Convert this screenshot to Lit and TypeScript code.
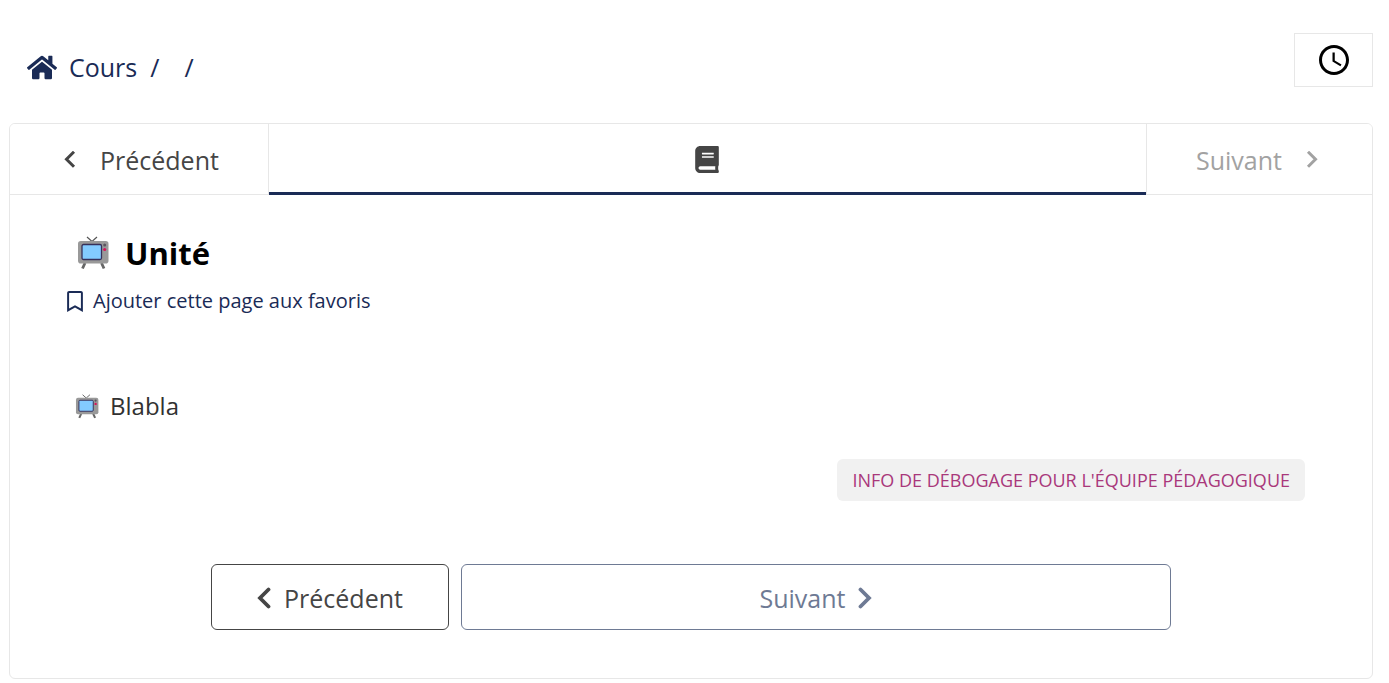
import { LitElement, html, css, svg } from "lit";
import { customElement, property } from "lit/decorators.js";

const shapes = {
  home: {
    box: "0 0 576 512",
    body: svg`<path d="M280.37 148.26L96 300.11V464a16 16 0 0 0 16 16l112.06-.29a16 16 0 0 0 15.92-16V368a16 16 0 0 1 16-16h64a16 16 0 0 1 16 16v95.64a16 16 0 0 0 16 16.05L464 480a16 16 0 0 0 16-16V300L295.67 148.26a12.19 12.19 0 0 0-15.3 0zM571.6 251.47L488 182.56V44.05a12 12 0 0 0-12-12h-56a12 12 0 0 0-12 12v72.61L318.47 43a48 48 0 0 0-61 0L4.34 251.47a12 12 0 0 0-1.6 16.9l25.5 31A12 12 0 0 0 45.15 301l235.22-193.74a12.19 12.19 0 0 1 15.3 0L530.9 301a12 12 0 0 0 16.9-1.6l25.5-31a12 12 0 0 0-1.7-16.93z"/>`,
  },
  clock: {
    box: "0 0 24 24",
    body: svg`<path d="M11.99 2C6.47 2 2 6.48 2 12s4.47 10 9.99 10C17.52 22 22 17.52 22 12S17.52 2 11.99 2zM12 20c-4.42 0-8-3.58-8-8s3.58-8 8-8 8 3.58 8 8-3.58 8-8 8zm.5-13H11v6l5.25 3.15.75-1.23-4.5-2.67z"/>`,
  },
  book: {
    box: "0 0 448 512",
    body: svg`<path d="M448 360V24c0-13.3-10.7-24-24-24H96C43 0 0 43 0 96v320c0 53 43 96 96 96h328c13.3 0 24-10.7 24-24v-16c0-7.5-3.5-14.3-8.9-18.7-4.2-15.4-4.2-59.3 0-74.7 5.4-4.3 8.9-11.1 8.9-18.6zM128 134c0-3.3 2.7-6 6-6h212c3.3 0 6 2.7 6 6v20c0 3.3-2.7 6-6 6H134c-3.3 0-6-2.7-6-6v-20zm0 64c0-3.3 2.7-6 6-6h212c3.3 0 6 2.7 6 6v20c0 3.3-2.7 6-6 6H134c-3.3 0-6-2.7-6-6v-20zm253.4 250H96c-17.7 0-32-14.3-32-32 0-17.6 14.4-32 32-32h285.4c-1.9 17.1-1.9 46.9 0 64z"/>`,
  },
  bookmark: {
    box: "0 0 384 512",
    body: svg`<path d="M336 0H48C21.49 0 0 21.49 0 48v464l192-112 192 112V48c0-26.51-21.49-48-48-48zm0 428.43l-144-84-144 84V54a6 6 0 0 1 6-6h276c3.314 0 6 2.683 6 5.996V428.43z"/>`,
  },
  thinLeft: {
    box: "0 0 12 18",
    body: svg`<path d="M10 .8 2.500 8.300l7.500 7.500" fill="none" stroke="currentColor" stroke-width="3"/>`,
  },
  thinRight: {
    box: "0 0 12 18",
    body: svg`<path d="M2 .8 9.500 8.300l-7.500 7.500" fill="none" stroke="currentColor" stroke-width="3"/>`,
  },
  boldLeft: {
    box: "0 0 14 22",
    body: svg`<path d="M11.500 2.500 3 11l8.500 8.500" fill="none" stroke="currentColor" stroke-width="3.800" stroke-linecap="round"/>`,
  },
  boldRight: {
    box: "0 0 14 22",
    body: svg`<path d="M2.500 2.500 11 11l-8.500 8.500" fill="none" stroke="currentColor" stroke-width="3.800" stroke-linecap="round"/>`,
  },
  tv: {
    box: "0 0 32 34",
    body: svg`
      <path d="M10 1 15 5.500 20 1" fill="none" stroke="#555" stroke-width="1.200"/>
      <path d="M8 27 5.500 32.500M24.500 27l2.500 5.500" fill="none" stroke="#666" stroke-width="2.800"/>
      <rect x="1" y="5" width="30.500" height="22.500" rx="2.800" fill="#999"/>
      <rect x="5" y="8.500" width="19.500" height="15" rx="1.500" fill="#83cbff" stroke="#37305a" stroke-width="1.300"/>
      <circle cx="27.700" cy="9" r="1.500" fill="#5c5560"/>
      <circle cx="27.700" cy="13.500" r="1.600" fill="#d8135c"/>`,
  },
};

@customElement("ui-icon")
export class UiIcon extends LitElement {
  @property() name: keyof typeof shapes = "home";

  static styles = css`
    :host { display: inline-flex; flex: none; }
    .glyph { width: 100%; height: 100%; fill: currentColor; }
  `;

  render() {
    const shape = shapes[this.name];
    return html`<svg class="glyph" viewBox=${shape.box} aria-hidden="true">${shape.body}</svg>`;
  }
}

@customElement("app-root")
export class AppRoot extends LitElement {
  static styles = css`
    :host {
      display: block;
      padding: 33px 16px 4px 9px;
      background: #fff;
      color: #313131;
      font-family: "Segoe UI", "Open Sans", "Noto Sans", sans-serif;
      font-size: 24px;
      line-height: 36px;
    }
    * { box-sizing: border-box; }
    button { font: inherit; margin: 0; background: #fff; cursor: pointer; }
    button:disabled { cursor: default; }
    a { color: inherit; text-decoration: none; }
    .top { display: flex; justify-content: space-between; align-items: flex-start; }
    .crumbs {
      display: flex; align-items: center; margin: 0; padding: 16px 18px 0; list-style: none;
      color: #1a2b56; font-size: 25px;
    }
    .crumbs li + li::before { content: "/"; padding: 0 12px 0 13px; }
    .home { display: flex; align-items: center; gap: 12px; }
    .home-icon { width: 30px; height: 27px; }
    .history {
      display: flex; align-items: center; justify-content: center;
      width: 79px; height: 54px; padding: 0; border: 1px solid #e7e7e7; color: #000;
    }
    .clock-icon { width: 36px; height: 36px; }
    .card { margin-top: 36px; border: 1px solid #e7e7e7; border-radius: 6px; overflow: hidden; }
    .tabs { display: flex; height: 71px; font-size: 25px; }
    .step {
      display: flex; align-items: center; gap: 24px; border: 0 solid #e7e7e7;
      border-bottom-width: 1px; padding: 1px 49px 0 54px; color: #454545;
    }
    .prev { border-right-width: 1px; }
    .next { border-left-width: 1px; padding: 1px 54px 0 49px; color: #a2a2a2; }
    .step-icon { width: 12px; height: 18px; }
    .unit-tab {
      flex: 1; display: flex; align-items: center; justify-content: center;
      border: 0; border-bottom: 3px solid #1a2b56; padding: 3px 0 0; color: #454545;
    }
    .book-icon { width: 24px; height: 27px; }
    .content { padding: 34px 57px 48px; }
    .title {
      display: flex; align-items: center; gap: 16px; margin: 0; padding-left: 10px;
      color: #000; font-size: 31px; line-height: 48px; font-weight: 700;
    }
    .tv-big { width: 32px; height: 34px; }
    .favorite {
      display: flex; align-items: center; gap: 10px; border: 0; padding: 0;
      color: #1a2b56; font-size: 20px; line-height: 48px;
    }
    .bookmark-icon { width: 16px; height: 21px; }
    .text { display: flex; align-items: center; gap: 11px; margin: 63px 0 0; padding-left: 8px; }
    .tv-small { width: 24px; height: 25px; }
    .debug-row { display: flex; justify-content: flex-end; margin-top: 35px; padding-right: 10px; }
    .debug {
      border: 0; border-radius: 6px; background: #f1f1f1; padding: 0 15px; color: #a9387b;
      font-family: "Open Sans", "Noto Sans", sans-serif;
      font-size: 18px; line-height: 42px; text-transform: uppercase;
    }
    .pager { display: flex; gap: 12px; max-width: 960px; margin: 63px auto 0; }
    .nav {
      display: flex; align-items: center; justify-content: center; gap: 13px;
      flex: 1; height: 66px; padding: 1px 0 0; border: 1px solid #454545; border-radius: 6px;
      color: #454545; font-size: 25px;
    }
    .nav.forward { flex: 3; border-color: #6e7a94; color: #6e7a94; }
    .nav-icon { width: 14px; height: 22px; }
  `;

  render() {
    return html`
      <header class="top">
        <nav aria-label="Fil d'Ariane">
          <ol class="crumbs">
            <li><a class="home" href="#"><ui-icon class="home-icon" name="home"></ui-icon>Cours</a></li>
            <li></li>
            <li></li>
          </ol>
        </nav>
        <button class="history" aria-label="Historique">
          <ui-icon class="clock-icon" name="clock"></ui-icon>
        </button>
      </header>
      <main class="card">
        <nav class="tabs" aria-label="Séquence">
          <button class="step prev">
            <ui-icon class="step-icon" name="thinLeft"></ui-icon>Précédent
          </button>
          <button class="unit-tab" aria-label="Unité">
            <ui-icon class="book-icon" name="book"></ui-icon>
          </button>
          <button class="step next" disabled>
            Suivant<ui-icon class="step-icon" name="thinRight"></ui-icon>
          </button>
        </nav>
        <section class="content">
          <h1 class="title"><ui-icon class="tv-big" name="tv"></ui-icon>Unité</h1>
          <button class="favorite">
            <ui-icon class="bookmark-icon" name="bookmark"></ui-icon>Ajouter cette page aux favoris
          </button>
          <p class="text"><ui-icon class="tv-small" name="tv"></ui-icon>Blabla</p>
          <div class="debug-row">
            <button class="debug">Info de débogage pour l'équipe pédagogique</button>
          </div>
          <div class="pager">
            <button class="nav"><ui-icon class="nav-icon" name="boldLeft"></ui-icon>Précédent</button>
            <button class="nav forward" disabled>Suivant<ui-icon class="nav-icon" name="boldRight"></ui-icon></button>
          </div>
        </section>
      </main>
    `;
  }
}
